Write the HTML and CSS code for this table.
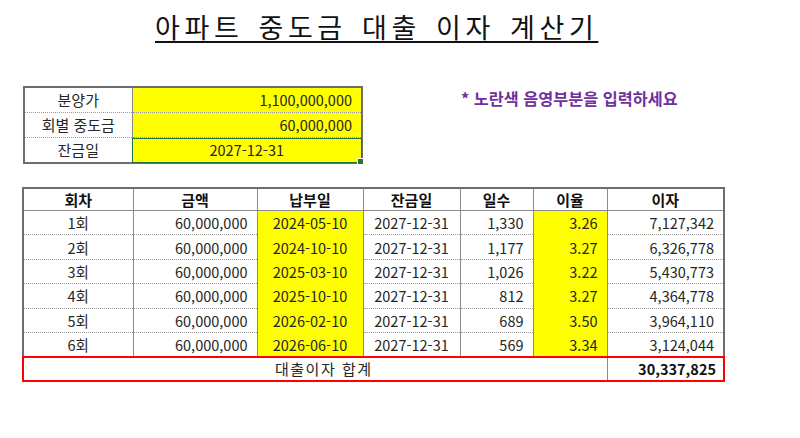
FILE: index.html
```html
<!DOCTYPE html>
<html lang="ko">
<head>
<meta charset="utf-8">
<title>아파트 중도금 대출 이자 계산기</title>
<link rel="stylesheet" href="styles.css">
</head>
<body>
<div class="sheet">
  <h1 class="title"><span>아파트 중도금 대출 이자 계산기</span></h1>

  <div class="inputs">
    <table class="input-table">
      <colgroup><col class="ic1"><col class="ic2"></colgroup>
      <tr><td class="lbl">분양가</td><td class="val yellow">1,100,000,000</td></tr>
      <tr><td class="lbl">회별 중도금</td><td class="val yellow">60,000,000</td></tr>
      <tr><td class="lbl last">잔금일</td><td class="val yellow selected center last"><span class="sel-text">2027-12-31</span><span class="handle"></span></td></tr>
    </table>
    <p class="note">* 노란색 음영부분을 입력하세요</p>
  </div>

  <table class="main-table">
    <colgroup>
      <col class="c1"><col class="c2"><col class="c3"><col class="c4"><col class="c5"><col class="c6"><col class="c7">
    </colgroup>
    <thead>
      <tr><th>회차</th><th>금액</th><th>납부일</th><th>잔금일</th><th>일수</th><th>이율</th><th>이자</th></tr>
    </thead>
    <tbody>
      <tr><td class="center">1회</td><td class="right">60,000,000</td><td class="center yellow">2024-05-10</td><td class="center">2027-12-31</td><td class="right">1,330</td><td class="right yellow">3.26</td><td class="right">7,127,342</td></tr>
      <tr><td class="center">2회</td><td class="right">60,000,000</td><td class="center yellow">2024-10-10</td><td class="center">2027-12-31</td><td class="right">1,177</td><td class="right yellow">3.27</td><td class="right">6,326,778</td></tr>
      <tr><td class="center">3회</td><td class="right">60,000,000</td><td class="center yellow">2025-03-10</td><td class="center">2027-12-31</td><td class="right">1,026</td><td class="right yellow">3.22</td><td class="right">5,430,773</td></tr>
      <tr><td class="center">4회</td><td class="right">60,000,000</td><td class="center yellow">2025-10-10</td><td class="center">2027-12-31</td><td class="right">812</td><td class="right yellow">3.27</td><td class="right">4,364,778</td></tr>
      <tr><td class="center">5회</td><td class="right">60,000,000</td><td class="center yellow">2026-02-10</td><td class="center">2027-12-31</td><td class="right">689</td><td class="right yellow">3.50</td><td class="right">3,964,110</td></tr>
      <tr><td class="center">6회</td><td class="right">60,000,000</td><td class="center yellow">2026-06-10</td><td class="center">2027-12-31</td><td class="right">569</td><td class="right yellow">3.34</td><td class="right">3,124,044</td></tr>
    </tbody>
    <tfoot>
      <tr class="sum"><td colspan="6" class="sum-label">대출이자 합계</td><td class="right sum-val">30,337,825</td></tr>
    </tfoot>
  </table>
</div>
</body>
</html>
```

FILE: styles.css
```css
html, body {
  margin: 0;
  padding: 0;
  background: #ffffff;
}

body {
  font-family: "Noto Sans CJK KR", "Noto Sans", sans-serif;
  color: #262626;
  width: 800px;
  height: 438px;
  overflow: hidden;
}

.sheet {
  padding-top: 12px;
}

.title {
  margin: 0 0 0 155px;
  font-size: 27px;
  font-weight: 400;
  line-height: 30px;
  color: #111;
  letter-spacing: 4.6px;
  word-spacing: 3px;
}

.title span {
  text-decoration: underline;
  text-decoration-thickness: 2px;
  text-underline-offset: 3px;
}

.inputs {
  display: flex;
  align-items: flex-start;
  margin-top: 44px;
  padding-left: 23px;
}

table {
  border-collapse: collapse;
  table-layout: fixed;
  font-size: 14.5px;
}

td, th {
  padding: 0 9px 0 4px;
  white-space: nowrap;
  overflow: visible;
}

.input-table {
  width: 338px;
  border: 2px solid #6e6e6e;
}

.ic1 { width: 108px; }
.ic2 { width: 230px; }

.input-table td {
  height: 24px;
  line-height: 24px;
  border-bottom: 1px dotted #9a9a9a;
}

.input-table td.last {
  border-bottom: none;
}

.input-table .lbl {
  text-align: center;
  border-right: 1px solid #8a8a8a;
  padding: 0;
  font-size: 15px;
}

.input-table .val {
  text-align: right;
}

.yellow {
  background: #ffff00;
}

.center {
  text-align: center !important;
}

.right {
  text-align: right;
}

.selected {
  position: relative;
  outline: 1px solid #217346;
  outline-offset: -1px;
  padding: 0;
}

.handle {
  position: absolute;
  right: -3px;
  bottom: -3px;
  width: 5px;
  height: 5px;
  background: #217346;
  border: 1px solid #ffffff;
}

.note {
  margin: 0 0 0 98px;
  font-size: 16.3px;
  font-weight: 700;
  color: #7030a0;
  line-height: 24px;
}

.main-table {
  margin-top: 23px;
  margin-left: 22px;
  width: 701px;
  border: 2px solid #6e6e6e;
}

.c1 { width: 110px; }
.c2 { width: 124px; }
.c3 { width: 106px; }
.c4 { width: 97px; }
.c5 { width: 73px; }
.c6 { width: 74px; }
.c7 { width: 117px; }

.main-table th {
  height: 21px;
  line-height: 21px;
  font-weight: 700;
  font-size: 15px;
  color: #111;
  text-align: center;
  padding: 0;
  border-right: 1px solid #8a8a8a;
  border-bottom: 1px solid #8a8a8a;
}

.main-table td {
  height: 23.4px;
  line-height: 23px;
  border-right: 1px solid #8a8a8a;
  border-bottom: 1px dotted #9a9a9a;
}

.main-table tbody tr:last-child td {
  border-bottom: none;
}

.main-table td.yellow {
  border-bottom-color: #ffff00;
}

.main-table td.center {
  padding: 0;
}

.sum td {
  height: 22px;
  line-height: 22px;
  border-top: 2px solid #ff0000;
  border-bottom: 2px solid #ff0000;
}

.sum td.sum-label {
  border-left: 2px solid #ff0000;
  text-align: center;
  padding-left: 26px;
  font-size: 15px;
  letter-spacing: 1.5px;
}

.sum td.sum-val {
  border-right: 2px solid #ff0000;
  font-weight: 700;
  color: #111;
  padding-right: 7px;
}
```
